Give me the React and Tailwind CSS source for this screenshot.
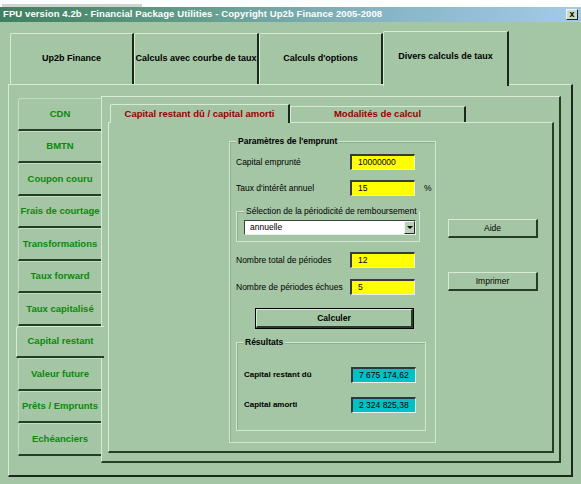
import React from "react";

function TopTab({ label, w, selected }) {
  if (selected) {
    return (
      <div className="h-[55px] w-[126px] flex items-start justify-center pt-[18px] border-t border-l border-[#d6ead6] border-r-2 border-r-[#1a2a1a] rounded-tl-[2px] -mb-[2px] relative z-10 bg-[#a4c6a4]">
        <span className="text-[9px] font-bold text-black whitespace-nowrap">{label}</span>
      </div>
    );
  }
  return (
    <div className={`h-[51px] ${w} flex items-center justify-center border-t border-l border-[#d6ead6] border-r-2 border-r-[#1a2a1a] rounded-tl-[2px]`}>
      <span className="text-[9px] font-bold text-black whitespace-nowrap">{label}</span>
    </div>
  );
}

function LeftTab({ label, selected }) {
  if (selected) {
    return (
      <div className="h-[32.5px] w-[88px] -ml-[2px] relative z-10 bg-[#a4c6a4] flex items-center justify-center border-t border-l border-[#d6ead6] border-b-2 border-b-[#263d26] rounded-tl-[3px]">
        <span className="text-[9.5px] font-bold text-[#0a8a0a] whitespace-nowrap">{label}</span>
      </div>
    );
  }
  return (
    <div className="h-[32.5px] w-[83px] flex items-center justify-center border-t border-l border-[#c4dcc4] border-b-2 border-b-[#263d26] rounded-tl-[3px]">
      <span className="text-[9.5px] font-bold text-[#0a8a0a] whitespace-nowrap">{label}</span>
    </div>
  );
}

function YellowBox({ value }) {
  return (
    <div className="w-[65px] h-[16px] bg-[#ffff00] border-t-2 border-l-2 border-t-[#3a3a3a] border-l-[#3a3a3a] border-b border-r border-b-[#e6f2e6] border-r-[#e6f2e6] pl-[6px] flex items-center text-[8.5px] text-black">
      {value}
    </div>
  );
}

function CyanBox({ value }) {
  return (
    <div className="w-[65px] h-[16px] bg-[#00c2c2] border-t-2 border-l-2 border-t-[#2a3a3a] border-l-[#2a3a3a] border-b border-r border-b-[#e6f2e6] border-r-[#e6f2e6] pl-[6px] flex items-center text-[8.5px] text-black">
      {value}
    </div>
  );
}

function Row({ label, children, mt }) {
  return (
    <div className={`flex items-center h-[16px] ${mt}`}>
      <div className="w-[114px] text-[8.5px] text-black whitespace-nowrap">{label}</div>
      {children}
    </div>
  );
}

function SideButton({ label, mt }) {
  return (
    <div className={`${mt} w-[90px] h-[19px] flex items-center justify-center border-t border-l border-[#d6ead6] border-b-2 border-r-2 border-b-[#263d26] border-r-[#263d26] text-[8.5px] text-black`}>
      {label}
    </div>
  );
}

export default function App() {
  const leftTabs = [
    "CDN",
    "BMTN",
    "Coupon couru",
    "Frais de courtage",
    "Transformations",
    "Taux forward",
    "Taux capitalisé",
    "Capital restant",
    "Valeur future",
    "Prêts / Emprunts",
    "Echéanciers",
  ];

  return (
    <div className="w-[581px] h-[484px] overflow-hidden bg-white font-['Liberation_Sans',Arial,sans-serif]">
      {/* faint strip */}
      <div className="h-[7px] bg-white flex items-end">
        <div className="w-[140px] h-[3px] ml-[2px] bg-[#cfd4cf]" />
      </div>
      {/* title bar */}
      <div className="h-[15px] flex items-center justify-between pl-[3px] pr-[3px] bg-[linear-gradient(90deg,#3f7f5f_0%,#5f9a86_30%,#86b4c4_65%,#a4cae8_100%)]">
        <span className="text-[9.5px] font-bold text-white whitespace-nowrap tracking-[0.1px]">
          FPU version 4.2b - Financial Package Utilities - Copyright Up2b Finance 2005-2008
        </span>
        <div className="w-[12px] h-[11px] flex items-center justify-center bg-[#c8dcc8] border-t border-l border-[#f0f8f0] border-b border-r border-b-[#202020] border-r-[#202020] text-[9px] font-bold leading-none text-black">
          x
        </div>
      </div>
      {/* body */}
      <div className="h-[462px] bg-[#a4c6a4] flex flex-col">
        {/* top tabs */}
        <div className="flex items-end pl-[10px] mt-[9px] h-[53px]">
          <TopTab label="Up2b Finance" w="w-[124px]" />
          <TopTab label="Calculs avec courbe de taux" w="w-[125px]" />
          <TopTab label="Calculs d'options" w="w-[124px]" />
          <TopTab label="Divers calculs de taux" selected />
        </div>
        {/* main frame */}
        <div className="ml-[8px] w-[565px] h-[393px] border-t border-l border-[#d6ead6] border-r-2 border-b-2 border-r-[#1a2a1a] border-b-[#1a2a1a] flex pt-[11px] pl-[9px]">
          {/* left tabs */}
          <div className="flex flex-col mt-[2px] w-[83px]">
            {leftTabs.map((t) => (
              <LeftTab key={t} label={t} selected={t === "Capital restant"} />
            ))}
          </div>
          {/* left multipage panel */}
          <div className="w-[460px] h-[367px] border-t border-l border-[#d6ead6] border-r-2 border-b-2 border-r-[#263d26] border-b-[#263d26] flex flex-col pt-[7px] pl-[6px]">
            {/* sub tabs */}
            <div className="flex items-end ml-[2px] h-[18px]">
              <div className="w-[180px] h-[19px] -mb-[1px] relative z-10 bg-[#a4c6a4] flex items-center justify-center border-t border-l border-[#d6ead6] border-r-2 border-r-[#1a2a1a] rounded-tl-[2px]">
                <span className="text-[9.5px] font-bold text-[#990000] whitespace-nowrap">Capital restant dû / capital amorti</span>
              </div>
              <div className="w-[176px] h-[16px] flex items-center justify-center border-t border-l border-[#d6ead6] border-r-2 border-r-[#1a2a1a]">
                <span className="text-[9.5px] font-bold text-[#990000] whitespace-nowrap">Modalités de calcul</span>
              </div>
            </div>
            {/* sub page */}
            <div className="w-[446px] h-[331px] border-t border-l border-[#d6ead6] border-r-2 border-b-2 border-r-[#263d26] border-b-[#263d26] flex pl-[120px] pt-[18px]">
              {/* params frame */}
              <div className="relative w-[207px] h-[302px] border border-[#d2e6d2] shadow-[inset_1px_1px_0_#8fae8f] flex flex-col pl-[6px]">
                <div className="absolute -top-[7px] left-[6px] px-[2px] bg-[#a4c6a4] text-[8.5px] font-bold text-black whitespace-nowrap leading-[12px]">
                  Paramètres de l'emprunt
                </div>
                <Row label="Capital emprunté" mt="mt-[12px]">
                  <YellowBox value="10000000" />
                </Row>
                <Row label="Taux d'intérêt annuel" mt="mt-[10px]">
                  <YellowBox value="15" />
                  <span className="ml-[9px] text-[8.5px] text-black">%</span>
                </Row>
                {/* selection frame */}
                <div className="relative mt-[15px] w-[184px] h-[31px] border border-[#d2e6d2] shadow-[inset_1px_1px_0_#8fae8f] pl-[7px] pt-[8px]">
                  <div className="absolute -top-[7px] left-[7px] px-[2px] bg-[#a4c6a4] text-[8.5px] text-black whitespace-nowrap leading-[12px]">
                    Sélection de la périodicité de remboursement
                  </div>
                  <div className="w-[172px] h-[15px] bg-white border-t border-l border-t-[#404040] border-l-[#404040] border-b border-r border-b-[#e6f2e6] border-r-[#e6f2e6] flex items-center justify-between">
                    <span className="pl-[5px] text-[8.5px] text-black">annuelle</span>
                    <div className="w-[11px] h-[13px] bg-[#b8d4b8] border-t border-l border-[#eef6ee] border-b border-r border-b-[#2a2a2a] border-r-[#2a2a2a] flex items-center justify-center">
                      <div className="w-0 h-0 border-l-[3px] border-r-[3px] border-t-[3px] border-l-transparent border-r-transparent border-t-black" />
                    </div>
                  </div>
                </div>
                <Row label="Nombre total de périodes" mt="mt-[10px]">
                  <YellowBox value="12" />
                </Row>
                <Row label="Nombre de périodes échues" mt="mt-[11px]">
                  <YellowBox value="5" />
                </Row>
                {/* Calculer */}
                <div className="mt-[13px] ml-[19px] w-[159px] h-[21px] border border-black">
                  <div className="w-full h-full border-t border-l border-[#d6ead6] border-b-2 border-r-2 border-b-[#263d26] border-r-[#263d26] flex items-center justify-center text-[8.5px] font-bold text-black">
                    Calculer
                  </div>
                </div>
                {/* Resultats */}
                <div className="relative mt-[13px] w-[190px] h-[89px] border border-[#d2e6d2] shadow-[inset_1px_1px_0_#8fae8f] flex flex-col pl-[7px]">
                  <div className="absolute -top-[7px] left-[6px] px-[2px] bg-[#a4c6a4] text-[8.5px] font-bold text-black whitespace-nowrap leading-[12px]">
                    Résultats
                  </div>
                  <div className="flex items-center h-[16px] mt-[24px]">
                    <div className="w-[107px] text-[8px] font-bold text-black whitespace-nowrap">Capital restant dû</div>
                    <CyanBox value="7 675 174,62" />
                  </div>
                  <div className="flex items-center h-[16px] mt-[14px]">
                    <div className="w-[107px] text-[8px] font-bold text-black whitespace-nowrap">Capital amorti</div>
                    <CyanBox value="2 324 825,38" />
                  </div>
                </div>
              </div>
              {/* right buttons */}
              <div className="flex flex-col ml-[12px]">
                <SideButton label="Aide" mt="mt-[78px]" />
                <SideButton label="Imprimer" mt="mt-[34px]" />
              </div>
            </div>
          </div>
        </div>
      </div>
    </div>
  );
}
